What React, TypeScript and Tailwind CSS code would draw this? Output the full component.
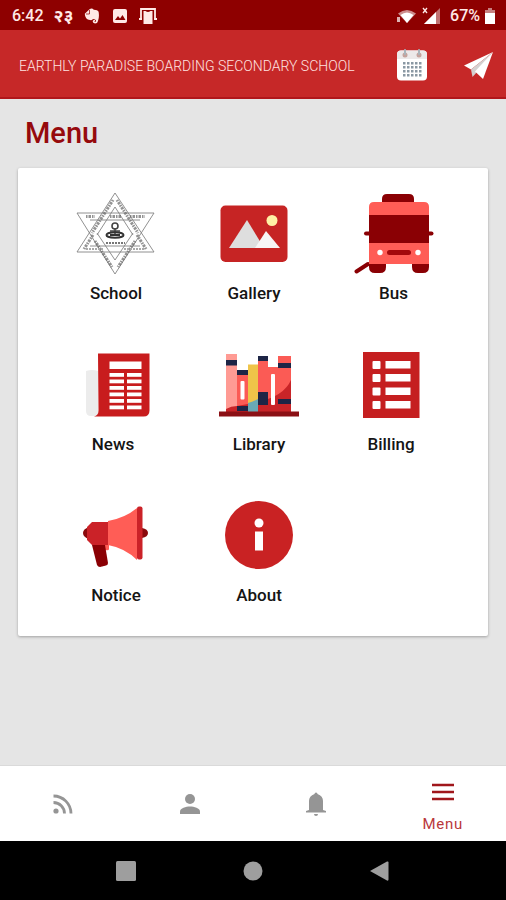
import type { ReactNode } from "react";

const Art = ({ box, children }: { box: string; children: ReactNode }) => (
  <svg viewBox={box} className="h-[84px] w-20" aria-hidden="true">
    {children}
  </svg>
);

const SchoolArt = () => (
  <Art box="76 192 80 84">
    <g fill="none" stroke="#858585" strokeWidth="0.9">
      <path d="M115 193 154 252H77Z" />
      <path d="M115 274 154 213H77Z" />
      <path d="M115 207 97 235M115 207 133 235M90 246H140" />
      <path d="M115 260 97 233M115 260 133 233M90 220H140" />
    </g>
    <g fill="none" stroke="#666" strokeWidth="3" strokeDasharray="1.500 1 2.500 1" opacity="0.7">
      <path d="M113 200 92 233M117 200 138 233" />
      <path d="M86 216.500H95M110 216.500H121M130 216.500H145" />
      <path d="M84 249 93 235M146 249 137 235" />
      <path d="M95 241 112 267M135 241 118 267" />
    </g>
    <path d="M86 249H104M124 249H144" stroke="#aaa" strokeWidth="2" strokeDasharray="2 1" />
    <circle cx="115" cy="226" r="3" fill="none" stroke="#444" strokeWidth="1.600" />
    <path d="M110 231h10M115 228v6" stroke="#444" strokeWidth="1.500" />
    <ellipse cx="115" cy="235" rx="8.500" ry="2.800" fill="none" stroke="#333" strokeWidth="2" />
    <path d="M110 235h10" stroke="#333" strokeWidth="2" />
    <path d="M106 243H125" stroke="#777" strokeWidth="2" strokeDasharray="2 1" />
  </Art>
);

const GalleryArt = () => (
  <Art box="214 192 80 84">
    <rect x="220.500" y="205.500" width="67" height="56.500" rx="5" fill="#c62424" />
    <path d="M229 248 247 220 264 248Z" fill="#dedede" />
    <path d="M255 248 266 231 280 248Z" fill="#f7f5f5" />
    <circle cx="272" cy="220.500" r="5.500" fill="#fff0a5" />
  </Art>
);

const BusArt = () => (
  <Art box="353 192 80 84">
    <path d="M381 205v-6q0-5 5-5h22q5 0 5 5v6z" fill="#8a0004" />
    <path d="M368 262h17v5q0 6-6 6h-5q-6 0-6-6zM411 262h17v5q0 6-6 6h-5q-6 0-6-6z" fill="#8a0004" />
    <path d="M367 264 355.500 271.500" stroke="#8a0004" strokeWidth="4" strokeLinecap="round" />
    <path d="M365 233.500h65.500" stroke="#8a0004" strokeWidth="4" strokeLinecap="round" />
    <path d="M368 264v-57q0-5 5-5h50q5 0 5 5v57z" fill="#ff5d56" />
    <rect x="368" y="215" width="60" height="28" fill="#8a0004" />
    <rect x="386" y="250" width="24" height="5" rx="2.500" fill="#a3090c" />
    <circle cx="379" cy="252.500" r="2.700" fill="#fff" />
    <circle cx="417" cy="252.500" r="2.700" fill="#fff" />
  </Art>
);

const newsLines = [373, 379.5, 386, 392.500, 399, 405.500];

const NewsArt = () => (
  <Art box="73 343 80 84">
    <path d="M86 371q6-2 12 0v45H91q-5 0-5-5z" fill="#ececec" />
    <path d="M98 353.500h51.500v57q0 6-6 6H94q4.500-1 4.500-6z" fill="#c81c1d" />
    <rect x="109.500" y="361.500" width="32" height="7.500" fill="#fff" />
    {newsLines.map((y) => (
      <g key={y} fill="#fff">
        <rect x="109.500" y={y} width="14.500" height="3.800" />
        <rect x="127" y={y} width="14.500" height="3.800" />
      </g>
    ))}
  </Art>
);

const LibraryArt = () => (
  <Art box="219 343 80 84">
    <rect x="226" y="354" width="11" height="58" fill="#ff9b94" />
    <rect x="237" y="370" width="11" height="42" fill="#fb5b55" />
    <rect x="248" y="364.500" width="10" height="47.500" fill="#efc449" />
    <rect x="258" y="356" width="10" height="56" fill="#fb5b55" />
    <rect x="268" y="367" width="10" height="45" fill="#fb5b55" />
    <rect x="278" y="356" width="13" height="56" fill="#fb5b55" />
    <path d="M226 412v-3q5-3 11-3v6zM237 406l11-2v8h-11zM258 402q26-6 33-22v32h-33z" fill="#c92428" />
    <path d="M248 403q5-1 10-4v13h-10z" fill="#69a9b5" />
    <g fill="#1d2546">
      <rect x="226" y="360" width="11" height="5.500" />
      <rect x="237" y="370" width="11" height="5" />
      <rect x="237" y="406" width="11" height="5" />
      <rect x="258" y="356" width="10" height="5" />
      <rect x="258" y="392" width="10" height="13" />
      <rect x="278" y="363" width="13" height="5" />
      <rect x="278" y="399" width="13" height="5" />
    </g>
    <rect x="240.500" y="381" width="4" height="18.500" rx="1" fill="#fff" />
    <rect x="271" y="374" width="4" height="31" rx="1" fill="#fff" />
    <rect x="219" y="411.500" width="80" height="5" fill="#8b1015" />
  </Art>
);

const billRows = [361, 374, 387.500, 401];

const BillingArt = () => (
  <Art box="351 343 80 84">
    <rect x="363" y="352" width="56.500" height="66" fill="#c51f20" />
    {billRows.map((y) => (
      <g key={y} fill="#fff">
        <rect x="372.500" y={y} width="8" height="8" rx="1" />
        <rect x="385.500" y={y} width="25" height="7.500" />
      </g>
    ))}
  </Art>
);

const NoticeArt = () => (
  <Art box="76 494 80 84">
    <path d="M89 527q-6 2-6 6t6 6zM142 528q6 1 6 5t-6 5z" fill="#8a0a0d" />
    <path d="M105 545h4v4q0 2-4 1z" fill="#ff5d56" />
    <path d="M92 545h13l3 18q0 2-2 2.500l-6 1.500q-2 0-3-2z" fill="#8a0004" />
    <path d="M92 522h16v23H92l-5-5v-13z" fill="#cb2228" />
    <path d="M108 521q17-3 29-13v52q-12-12-29-15z" fill="#ff5d56" />
    <rect x="137" y="506.500" width="5.500" height="53" rx="2" fill="#cb2228" />
  </Art>
);

const AboutArt = () => (
  <Art box="219 494 80 84">
    <circle cx="259" cy="535" r="34" fill="#c92223" />
    <circle cx="259" cy="523" r="4.500" fill="#fff" />
    <rect x="255" y="531.500" width="8" height="19" fill="#fff" />
  </Art>
);

type Item = { label: string; art: ReactNode };

const menuRows: { columns: string; items: Item[] }[] = [
  {
    columns: "grid-cols-[138fr_138fr_141fr]",
    items: [
      { label: "School", art: <SchoolArt /> },
      { label: "Gallery", art: <GalleryArt /> },
      { label: "Bus", art: <BusArt /> },
    ],
  },
  {
    columns: "grid-cols-[132fr_160fr_104fr_21fr]",
    items: [
      { label: "News", art: <NewsArt /> },
      { label: "Library", art: <LibraryArt /> },
      { label: "Billing", art: <BillingArt /> },
    ],
  },
  {
    columns: "grid-cols-[138fr_148fr_131fr]",
    items: [
      { label: "Notice", art: <NoticeArt /> },
      { label: "About", art: <AboutArt /> },
    ],
  },
];

const StatusBar = () => (
  <div className="flex h-[30px] items-center bg-[#8e0000] pt-px pr-2.5 pl-3 text-base font-medium text-[#ffe9e6]">
    <span>6:42</span>
    <span className="ml-2.5 text-lg leading-6 font-bold">२३</span>
    <svg viewBox="0 0 16 16" className="ml-2.5 size-4" fill="#ffe9e6" aria-hidden="true">
      <path d="M.8 5.800 5.500 1.200Q8-.3 9.800 1.800q4 0 4.800 2Q15.500 9 14 13q-.5 2.500-3 2.500-2.500-.2-2.300-2.500.5-1.500 2.300-1v1.500q-1-.2-.7.500 1.700.3 1.700-1.500-.5-1.500-3-1.500-.7 1.500-3 1Q1 11.500.8 5.800z" />
      <path d="M2 6h3.500V2" fill="none" stroke="#8e0000" strokeWidth=".7" />
    </svg>
    <svg viewBox="0 0 16 16" className="ml-3 size-4" aria-hidden="true">
      <rect x="1" y="1" width="14" height="14" rx="2" fill="#ffe9e6" />
      <path d="M3 12 6 8l2 2.500L10.500 7 13.500 12z" fill="#8e0000" />
    </svg>
    <svg viewBox="0 0 20 18" className="ml-2.5 h-[18px] w-5" aria-hidden="true">
      <path d="M1 12h3M16 12h3M3 12V2h14v10" fill="none" stroke="#ffe9e6" strokeWidth="1.800" />
      <path d="M5.500 4h2q2.500 2 5 0h2v13h-9z" fill="#ffe9e6" />
    </svg>
    <svg viewBox="0 0 22 18" className="ml-auto h-[18px] w-[22px]" fill="#fff" aria-hidden="true">
      <path d="M2 6.500Q11-.5 20 6.500L11 16z" opacity=".55" />
      <path d="M4.500 8q6.500-5 13 0L11 16z" />
      <path d="M1 10h3v5H1z" opacity=".7" />
    </svg>
    <svg viewBox="0 0 20 20" className="ml-1 size-5" aria-hidden="true">
      <path d="M2 18 18 2v16z" fill="#fff" opacity=".45" />
      <path d="M2 18 14 6v12z" fill="#fff" />
      <path d="m1 2 4 5M5 2 1 7" stroke="#ffe9e6" strokeWidth="1.300" />
    </svg>
    <span className="ml-2">67%</span>
    <svg viewBox="0 0 12 16" className="ml-1 h-4 w-3" fill="#fff" aria-hidden="true">
      <path d="M4 0h4v2h3v3H1V2h3z" opacity=".5" />
      <path d="M1 5h10v11H1z" />
    </svg>
  </div>
);

const Header = () => (
  <header className="flex h-[69px] items-center border-b-2 border-[#b0161b] bg-[#c62828] pt-1 pr-3 pl-[19px]">
    <span className="flex-1 text-sm font-light whitespace-nowrap text-[#ffe4e1]">
      EARTHLY PARADISE BOARDING SECONDARY SCHOOL
    </span>
    <button type="button" aria-label="Calendar" className="mr-9">
      <svg viewBox="0 0 32 34" className="h-[34px] w-8" aria-hidden="true">
        <rect x="1" y="1.500" width="30" height="30" rx="4" fill="#fff" />
        <path d="M1 10V5.500q0-4 4-4h22q4 0 4 4V10z" fill="#ece9e9" />
        {[9, 23].map((x) => (
          <g key={x}>
            <circle cx={x} cy="6" r="2.500" fill="#c4a39d" />
            <rect x={x - 1} y="0" width="2" height="6" rx="1" fill="#a9b4bb" />
          </g>
        ))}
        {[14, 18, 22, 26].map((y) =>
          [7, 11, 15, 19, 23].map((x) => (
            <rect key={`${x}-${y}`} x={x} y={y - 1} width="2.500" height="2.500" fill="#8a98a3" />
          )),
        )}
      </svg>
    </button>
    <button type="button" aria-label="Send">
      <svg viewBox="0 0 30 30" className="size-[30px]" aria-hidden="true">
        <path d="M29 1 0 14.500l7 4z" fill="#fff" />
        <path d="M29 1 7 18.500l1.500 7.500 4.500-5z" fill="#d5d0d0" />
        <path d="M29 1 11 20.500l8 7.500z" fill="#fff" />
      </svg>
    </button>
  </header>
);

const BottomNav = () => (
  <nav className="grid h-[75px] grid-cols-4 bg-white text-[#959595]">
    <button type="button" aria-label="Feed" className="flex items-center justify-center">
      <svg viewBox="0 0 20 20" className="size-5" fill="none" stroke="currentColor" strokeWidth="2.800" aria-hidden="true">
        <circle cx="3" cy="17" r="2.600" fill="currentColor" stroke="none" />
        <path d="M.5 8.500A11 11 0 0 1 11.500 19.500M.5 2A17.500 17.500 0 0 1 18 19.500" />
      </svg>
    </button>
    <button type="button" aria-label="Profile" className="flex items-center justify-center">
      <svg viewBox="0 0 20 20" className="size-5" fill="currentColor" aria-hidden="true">
        <circle cx="10" cy="5" r="5" />
        <path d="M0 20v-2.500C0 14 6 12.500 10 12.500s10 1.500 10 5V20z" />
      </svg>
    </button>
    <button type="button" aria-label="Notifications" className="flex items-center justify-center">
      <svg viewBox="0 0 20 24" className="h-6 w-5" fill="currentColor" aria-hidden="true">
        <path d="M8.500 2a1.500 1.500 0 0 1 3 0Q17 4 17 9v9l3 1v1.500H0V19l3-1V9q0-5 5.500-7zM8 22h4q0 2-2 2t-2-2z" />
      </svg>
    </button>
    <button type="button" aria-current="page" className="flex flex-col items-center gap-3 pt-[17px] text-[#b9383b]">
      <svg viewBox="0 0 22 18" className="h-[18px] w-[22px]" aria-hidden="true">
        <path d="M0 2h22M0 9h22M0 16h22" stroke="#a0161b" strokeWidth="2.400" />
      </svg>
      <span className="text-[15px] leading-[22px] tracking-wider">Menu</span>
    </button>
  </nav>
);

const SystemBar = () => (
  <div className="flex h-[59px] items-center justify-center gap-[107px] bg-black text-[#9e9e9e]">
    <button type="button" aria-label="Recent apps">
      <svg viewBox="0 0 20 20" className="size-5" fill="currentColor" aria-hidden="true">
        <rect width="20" height="20" rx="1.500" />
      </svg>
    </button>
    <button type="button" aria-label="Home">
      <svg viewBox="0 0 20 20" className="size-5" fill="currentColor" aria-hidden="true">
        <circle cx="10" cy="10" r="9.500" />
      </svg>
    </button>
    <button type="button" aria-label="Back">
      <svg viewBox="0 0 20 20" className="size-5" fill="currentColor" aria-hidden="true">
        <path d="M0 10 17 .5q1.500-.5 1.500 1v17q0 1.500-1.500 1z" />
      </svg>
    </button>
  </div>
);

export default function App() {
  return (
    <div className="flex min-h-screen flex-col bg-[#e5e5e5] font-['Roboto','Noto_Sans',sans-serif]">
      <StatusBar />
      <Header />
      <main className="flex-1 border-b border-[#dadada] px-[18px] pt-4">
        <h1 className="pl-[7px] text-[29px] leading-9 font-medium text-[#960a0d]">Menu</h1>
        <section className="mt-[17px] flex flex-col gap-[38px] rounded-xs bg-white pt-6 pr-6 pb-[29px] pl-[29px] shadow-[0_1px_3px_rgba(0,0,0,0.3)]">
          {menuRows.map((row) => (
            <div key={row.items[0].label} className={`grid ${row.columns}`}>
              {row.items.map((item) => (
                <button key={item.label} type="button" className="flex flex-col items-center gap-[5px]">
                  {item.art}
                  <span className="text-[17px] leading-6 font-medium text-[#151515]">{item.label}</span>
                </button>
              ))}
            </div>
          ))}
        </section>
      </main>
      <BottomNav />
      <SystemBar />
    </div>
  );
}
